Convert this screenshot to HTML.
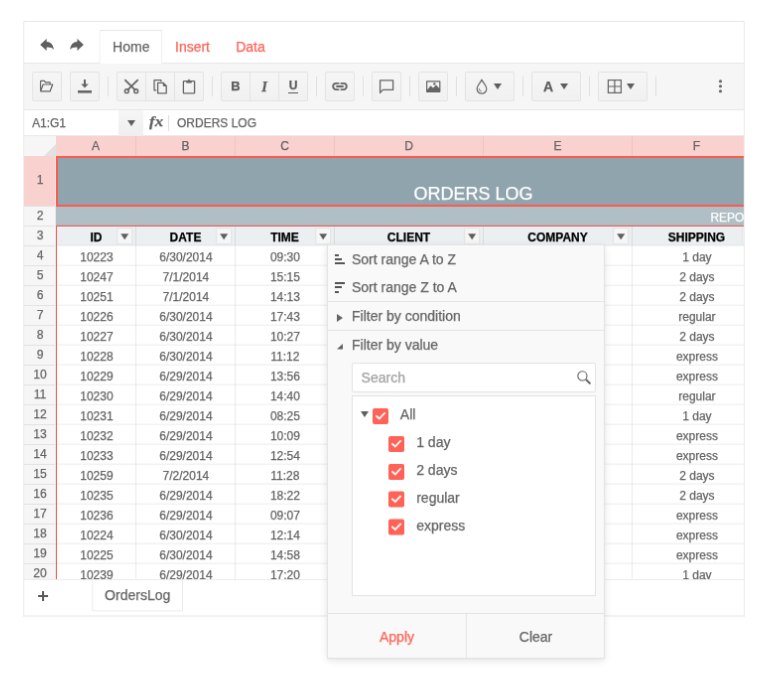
<!DOCTYPE html>
<html><head><meta charset="utf-8"><title>Spreadsheet</title>
<style>
html,body{margin:0;padding:0;background:#fff;}
body{width:770px;height:681px;overflow:hidden;position:relative;font-family:"Liberation Sans",sans-serif;font-size:14px;color:#656565;}
#s{-webkit-text-stroke:0.25px;will-change:transform;position:absolute;left:0;top:0;width:790px;height:700px;transform-origin:0 0;transform:translate(0.37px,0px) scale(0.99248,0.9934);}
#w{position:absolute;left:23px;top:21px;width:727px;height:600px;box-sizing:border-box;border:1px solid #e8e8e8;border-bottom:0;border-right-color:#ededed;overflow:hidden;background:#fff;}
#w div,#pop div{position:absolute;box-sizing:border-box;}
svg{position:absolute;overflow:visible;}
/* tabs */
#tabs{left:0;top:0;width:100%;height:41px;}
.tab{top:8px;height:33px;line-height:20px;padding:6px 12px;font-size:14px;color:#ff6358;border:1px solid transparent;border-bottom:0;white-space:nowrap;}
.tab.on{color:#656565;border-color:#e6e6e6;background:#fff;border-radius:2px 2px 0 0;height:34px;z-index:3;transform:translateX(0.4px);}
/* toolbar */
#tb{left:0;top:41px;width:100%;height:48px;background:#f6f6f6;border-top:1px solid #e8e8e8;border-bottom:1px solid #e8e8e8;}
.b{top:8px;height:30px;width:30px;border:1px solid #e4e4e4;border-radius:2px;background:linear-gradient(#f6f6f6,#f1f1f1);}
.b.g1{border-radius:2px 0 0 2px;}
.b.g2{border-radius:0;}
.b.g3{border-radius:0 2px 2px 0;}
.b.w{width:50px;}
.sp{top:13px;width:1px;height:20px;background:#e0e0e0;}
.arr{width:0;height:0;border-left:4.2px solid transparent;border-right:4.2px solid transparent;border-top:6.3px solid #5e5e5e;top:11.2px;}
/* formula bar */
#fbar{left:0;top:89px;width:100%;height:26px;background:#fff;font-size:12px;border-bottom:1px solid #eaeaea;}
#fbar .nm{left:8px;top:-1px;line-height:28px;height:27px;color:#656565;}
#fbar .sel{left:95px;top:0;width:25px;height:26px;background:linear-gradient(#f6f6f6,#efefef);}
#fbar .fx{left:126.4px;top:-1.7px;transform:scaleX(1.07);transform-origin:0 0;height:27px;line-height:26.4px;font-family:"Liberation Serif",serif;font-style:italic;font-weight:bold;font-size:15.5px;color:#606060;letter-spacing:0.2px;}
#fbar .vs{left:145px;top:5px;width:1px;height:16px;background:#e0e0e0;}
#fbar .val{left:154px;top:-1px;line-height:28px;height:27px;white-space:nowrap;}
/* grid */
#grid{left:0;top:115px;width:100%;height:446px;overflow:visible;font-size:12px;background:#fff;}
.corner{left:0;top:0;width:32px;height:20px;background:#f6f6f6;}
.corner i{position:absolute;right:0;bottom:0;width:0;height:0;border-left:12px solid transparent;border-bottom:12px solid #e1e1e1;}
.ch{top:0;height:20px;line-height:20.6px;text-align:center;background:#f9d1ce;color:#656565;border-left:1px solid #efc5c2;}
.rh{left:0;width:32px;height:20px;line-height:19.8px;padding-left:1px;text-align:center;background:#f6f6f6;border-top:1px solid #e3e3e3;border-right:1px solid #e6e6e6;color:#656565;}
.rh.sel{background:#f9d1ce;border-top:0;border-right:1px solid #fbe3e1;}
.r1{top:20px;right:0;height:50px;background:#90a4ae;}
.r2{top:70px;right:0;height:20px;background:#b0bec5;color:#fff;}
.r2 span{position:absolute;left:659.4px;top:0;line-height:25px;white-space:nowrap;}
.r3{top:90px;right:0;height:20px;background:#eceff1;}
.vl{top:90px;width:1px;height:400px;background:rgba(0,0,0,0.075);}
.hls{left:0;top:0;width:100%;height:100%;transform:translateY(-0.35px);}
.hl{right:0;height:1px;background:rgba(0,0,0,0.075);}
.hc{top:92px;height:20px;line-height:21.9px;text-align:center;font-weight:bold;color:#000;}
.fb{top:92px;width:16px;height:17px;border:1px solid #e1e3e4;background:#f6f6f6;border-radius:1.5px;transform:translate(0.2px,0.2px);}
.fb i{position:absolute;left:2.6px;top:4.7px;width:0;height:0;border-left:4.4px solid transparent;border-right:4.4px solid transparent;border-top:6.4px solid #5e5e5e;}
.c{height:20px;line-height:22.4px;padding-left:0.8px;text-align:center;color:#656565;white-space:nowrap;}
.title{top:20px;width:840px;height:50px;line-height:76.2px;padding-left:1px;text-align:center;font-size:18px;color:#fff;white-space:nowrap;}
.frange{top:90px;right:-5px;height:500px;border:1px solid #ff6358;border-top-color:#f85146;}
.active{top:20px;right:-5px;height:51px;border:2px solid #ff5a50;}
/* sheets bar */
#sheets{left:0;top:561px;width:100%;height:38px;background:#fff;border-top:1px solid #ededed;}
#sheets .plus{left:14px;top:11px;width:10px;height:10px;}
#sheets .plus:before{content:"";position:absolute;left:0;top:4px;width:10px;height:2px;background:#5a5a5a;}
#sheets .plus:after{content:"";position:absolute;left:4px;top:0;width:2px;height:10px;background:#5a5a5a;}
#sheets .st{left:68px;top:-1px;width:92px;height:33px;border:1px solid #e6e6e6;border-top:0;border-radius:0 0 2px 2px;line-height:33px;text-align:center;font-size:14px;color:#656565;transform:translate(0.2px,-0.4px);}
#bl{left:0;top:597px;width:100%;height:1px;background:#e8e8e8;transform:translateY(0.5px);}
/* popup */
#pop{position:absolute;left:329px;top:246px;width:280px;height:417px;background:#f9f9f9;border:1px solid #e4e4e4;box-sizing:border-box;box-shadow:0 3px 8px rgba(0,0,0,0.085),0 1px 3px rgba(0,0,0,0.05);font-size:14px;color:#656565;}
#pop .mi{left:0;width:278px;height:28px;line-height:20px;padding:4px 0 4px 24px;white-space:nowrap;}
#pop .hr{left:0;width:278px;height:1px;background:#e6e6e6;}
#pop .bar{height:2px;background:#555;}
#pop .srch{left:24px;top:118px;width:246px;height:30px;background:#fff;border:1px solid #e4e4e4;border-radius:2px;line-height:28px;padding-left:8.6px;color:#a3a3a3;}
#pop .tree{left:24px;top:151px;width:246px;height:202px;background:#fff;border:1px solid #e4e4e4;}
#pop .cb{width:16px;height:16px;background:#ff6358;border-radius:2px;}
#pop .tl{height:28px;line-height:28px;white-space:nowrap;}
#pop .btns{left:0;top:370px;width:278px;height:45px;border-top:1px solid #e4e4e4;}
#pop .btn{top:0;width:140px;height:44px;line-height:46.8px;text-align:center;}

</style></head>
<body>
<div id="s">
<div id="w">
<div id="tabs">
<svg style="left:16px;top:16px" width="14" height="14" viewBox="0 0 14 14"><path d="M0.1 6.9 L6.6 1.1 V4 C10.6 4.1 13.3 6.8 13.9 12 C12.2 10 10 9.4 6.6 9.5 V12.9 Z" fill="#606060"/></svg>
<svg style="left:46px;top:16px" width="14" height="14" viewBox="0 0 14 14"><path d="M13.9 6.9 L7.4 1.1 V4 C3.4 4.1 0.7 6.8 0.1 12 C1.8 10 4 9.4 7.4 9.5 V12.9 Z" fill="#606060"/></svg>
<div class="tab on" style="left:75px;width:64px;padding-left:12.7px">Home</div>
<div class="tab" style="left:139px">Insert</div>
<div class="tab" style="left:200px;transform:translateX(0.2px)">Data</div>
</div>
<div id="tb">
<div class="b" style="left:8px"><svg style="left:6px;top:6px" width="16" height="16" viewBox="0 0 16 16" fill="none" stroke="#606060" stroke-width="1.15" stroke-linejoin="round"><path d="M1.5 12.6 V2.8 Q1.5 2.3 2 2.3 H5.3 L6.5 3.9 H11.1 V5.8"/><path d="M1.5 12.8 L4.1 6 H13.7 L11.1 12.8 Z"/></svg></div>
<div class="b" style="left:46px"><svg style="left:6px;top:6px" width="16" height="16" viewBox="0 0 16 16" fill="#656565"><path d="M7 1 H9 V5.6 H11.8 L8 9.6 L4.2 5.6 H7 Z"/><rect x="1" y="12" width="14" height="2.6"/></svg></div>
<div class="sp" style="left:84px"></div>
<div class="b g1" style="left:93px"><svg style="left:6px;top:6px" width="16" height="16" viewBox="0 0 16 16" fill="none" stroke="#606060" stroke-width="1.6" stroke-linecap="round"><path d="M1.8 1.6 L11.6 11.4"/><path d="M14.2 1.6 L4.4 11.4"/><circle cx="3.3" cy="12.7" r="1.9" stroke-width="1.45"/><circle cx="12.7" cy="12.7" r="1.9" stroke-width="1.45"/></svg></div>
<div class="b g2" style="left:122px"><svg style="left:6px;top:6px" width="16" height="16" viewBox="0 0 16 16" fill="none" stroke="#656565" stroke-width="1.3" stroke-linejoin="round"><path d="M4.2 11.8 H2 V1.6 H8.8 V3.2"/><path d="M5.6 4.4 H11.2 L14.2 7.4 V14.8 H5.6 Z" fill="#f4f4f4"/><path d="M11.2 4.4 V7.4 H14.2 Z" stroke-width="1" fill="#656565"/></svg></div>
<div class="b g3" style="left:151px"><svg style="left:6px;top:6px" width="16" height="16" viewBox="0 0 16 16" fill="none" stroke="#656565" stroke-width="1.3" stroke-linejoin="round"><rect x="2.4" y="2.6" width="11.2" height="12.2" rx="0.6"/><path d="M5.5 2.6 H6.8 Q7.1 0.9 8 0.9 Q8.9 0.9 9.2 2.6 H10.5 V4.2 H5.5 Z" fill="#656565" stroke-width="0.5"/></svg></div>
<div class="sp" style="left:189px"></div>
<div class="b g1" style="left:198px"><span style="position:absolute;left:0;width:28px;text-align:center;top:0;line-height:28px;font-weight:bold;font-size:13px;color:#5c5c5c">B</span></div>
<div class="b g2" style="left:227px"><span style="position:absolute;left:0;width:28px;text-align:center;top:0;line-height:28.6px;font-family:'Liberation Serif',serif;font-style:italic;font-weight:bold;font-size:14.5px;color:#5c5c5c">I</span></div>
<div class="b g3" style="left:256px"><span style="position:absolute;left:0;width:28px;text-align:center;top:0;line-height:26.4px;font-weight:bold;font-size:12px;color:#5c5c5c">U</span><i style="position:absolute;left:9.4px;top:19.6px;width:9.2px;height:1px;background:#5c5c5c"></i></div>
<div class="sp" style="left:294px"></div>
<div class="b" style="left:303px"><svg style="left:6px;top:6px" width="16" height="16" viewBox="0 0 16 16" fill="none" stroke="#656565" stroke-width="1.9" stroke-linecap="round"><path d="M6.6 4.9 H4.3 A3.1 3.1 0 0 0 4.3 11.1 H6.6"/><path d="M9.4 4.9 H11.7 A3.1 3.1 0 0 1 11.7 11.1 H9.4"/><path d="M5 8 H11"/></svg></div>
<div class="sp" style="left:341px"></div>
<div class="b" style="left:350px"><svg style="left:6px;top:6px" width="16" height="16" viewBox="0 0 16 16" fill="none" stroke="#656565" stroke-width="1.3" stroke-linejoin="round"><path d="M1.6 1.8 H14.6 V11.4 H4.4 L1.6 14.4 Z"/></svg></div>
<div class="sp" style="left:388px"></div>
<div class="b" style="left:397px"><svg style="left:6px;top:6px" width="16" height="16" viewBox="0 0 16 16"><rect x="1" y="2.2" width="14.4" height="11.8" rx="0.8" fill="#656565"/><path d="M2.2 11.2 L5.6 7.2 L8 9.6 L11 6.6 L14.2 9.8 V3.4 H2.2 Z" fill="#f4f4f4"/><circle cx="9.3" cy="5.4" r="1.2" fill="#656565"/></svg></div>
<div class="sp" style="left:435px"></div>
<div class="b w" style="left:444px"><svg style="left:8.2px;top:6px" width="16" height="16" viewBox="0 0 16 16" fill="none" stroke="#656565" stroke-width="1.2"><path d="M8 1.4 C6.4 4.4 3.2 7.4 3.2 10.4 A4.8 4.8 0 0 0 12.8 10.4 C12.8 7.4 9.6 4.4 8 1.4 Z"/><path d="M5.4 10.2 C5.4 11.6 6.4 12.6 7.6 12.7" stroke-width="1"/></svg><div class="arr" style="left:28.3px"></div></div>
<div class="sp" style="left:502px"></div>
<div class="b w" style="left:511px"><span style="position:absolute;left:6px;width:20px;text-align:center;top:0;line-height:29px;font-weight:bold;font-size:14px;color:#5c5c5c">A</span><div class="arr" style="left:28.3px"></div></div>
<div class="sp" style="left:569px"></div>
<div class="b w" style="left:578px"><svg style="left:8.2px;top:6px" width="16" height="16" viewBox="0 0 16 16" fill="none" stroke="#656565" stroke-width="1.2"><rect x="1.4" y="1.6" width="13" height="12.8"/><path d="M7.9 1.6 V14.4 M1.4 8 H14.4"/></svg><div class="arr" style="left:28.3px"></div></div>
<div class="sp" style="left:636px"></div>
<svg style="left:700px;top:16px" width="3" height="14" viewBox="0 0 3 14" fill="#656565"><circle cx="1.5" cy="1.8" r="1.55"/><circle cx="1.5" cy="6.8" r="1.55"/><circle cx="1.5" cy="11.8" r="1.55"/></svg>
</div>
<div id="fbar">
<div class="nm">A1:G1</div>
<div class="sel"><div class="arr" style="left:8.6px;top:10.3px;border-left-width:4.4px;border-right-width:4.4px;border-top-width:6px"></div></div>
<div class="fx">fx</div>
<div class="vs"></div>
<div class="val">ORDERS LOG</div>
</div>
<div id="grid">
<div class="corner"><i></i></div>
<div class="ch" style="left:32px;width:80px;border-left:0">A</div>
<div class="ch" style="left:112px;width:100px">B</div>
<div class="ch" style="left:212px;width:100px">C</div>
<div class="ch" style="left:312px;width:150px">D</div>
<div class="ch" style="left:462px;width:150px">E</div>
<div class="ch" style="left:612px;width:130px">F</div>
<div class="ch" style="left:742px;width:120px">G</div>
<div class="rh sel" style="top:20px;height:50px;line-height:48.8px">1</div>
<div class="rh" style="top:70px">2</div>
<div class="rh" style="top:90px">3</div>
<div class="rh" style="top:110px">4</div>
<div class="rh" style="top:130px">5</div>
<div class="rh" style="top:150px">6</div>
<div class="rh" style="top:170px">7</div>
<div class="rh" style="top:190px">8</div>
<div class="rh" style="top:210px">9</div>
<div class="rh" style="top:230px">10</div>
<div class="rh" style="top:250px">11</div>
<div class="rh" style="top:270px">12</div>
<div class="rh" style="top:290px">13</div>
<div class="rh" style="top:310px">14</div>
<div class="rh" style="top:330px">15</div>
<div class="rh" style="top:350px">16</div>
<div class="rh" style="top:370px">17</div>
<div class="rh" style="top:390px">18</div>
<div class="rh" style="top:410px">19</div>
<div class="rh" style="top:430px">20</div>
<div class="rh" style="top:450px">21</div>
<div class="r1" style="left:32px"></div>
<div class="r2" style="left:32px"><span>REPORT</span></div>
<div class="r3" style="left:32px"></div>
<div class="vl" style="left:112px"></div>
<div class="vl" style="left:212px"></div>
<div class="vl" style="left:312px"></div>
<div class="vl" style="left:462px"></div>
<div class="vl" style="left:612px"></div>
<div class="vl" style="left:742px"></div>
<div class="hls">
<div class="hl" style="top:90px;left:32px"></div>
<div class="hl" style="top:110px;left:32px"></div>
<div class="hl" style="top:130px;left:32px"></div>
<div class="hl" style="top:150px;left:32px"></div>
<div class="hl" style="top:170px;left:32px"></div>
<div class="hl" style="top:190px;left:32px"></div>
<div class="hl" style="top:210px;left:32px"></div>
<div class="hl" style="top:230px;left:32px"></div>
<div class="hl" style="top:250px;left:32px"></div>
<div class="hl" style="top:270px;left:32px"></div>
<div class="hl" style="top:290px;left:32px"></div>
<div class="hl" style="top:310px;left:32px"></div>
<div class="hl" style="top:330px;left:32px"></div>
<div class="hl" style="top:350px;left:32px"></div>
<div class="hl" style="top:370px;left:32px"></div>
<div class="hl" style="top:390px;left:32px"></div>
<div class="hl" style="top:410px;left:32px"></div>
<div class="hl" style="top:430px;left:32px"></div>
<div class="hl" style="top:450px;left:32px"></div>
<div class="hl hl2" style="top:70px;left:32px"></div>
</div>
<div class="hc" style="left:33px;width:79px">ID</div>
<div class="fb" style="left:93px"><i></i></div>
<div class="hc" style="left:113px;width:99px">DATE</div>
<div class="fb" style="left:193px"><i></i></div>
<div class="hc" style="left:213px;width:99px">TIME</div>
<div class="fb" style="left:293px"><i></i></div>
<div class="hc" style="left:313px;width:149px">CLIENT</div>
<div class="fb" style="left:443px"><i></i></div>
<div class="hc" style="left:463px;width:149px">COMPANY</div>
<div class="fb" style="left:593px"><i></i></div>
<div class="hc" style="left:613px;width:129px">SHIPPING</div>
<div class="fb" style="left:723px"><i></i></div>
<div class="c" style="top:111px;left:33px;width:79px">10223</div>
<div class="c" style="top:111px;left:113px;width:99px">6/30/2014</div>
<div class="c" style="top:111px;left:213px;width:99px">09:30</div>
<div class="c" style="top:111px;left:613px;width:129px">1 day</div>
<div class="c" style="top:131px;left:33px;width:79px">10247</div>
<div class="c" style="top:131px;left:113px;width:99px">7/1/2014</div>
<div class="c" style="top:131px;left:213px;width:99px">15:15</div>
<div class="c" style="top:131px;left:613px;width:129px">2 days</div>
<div class="c" style="top:151px;left:33px;width:79px">10251</div>
<div class="c" style="top:151px;left:113px;width:99px">7/1/2014</div>
<div class="c" style="top:151px;left:213px;width:99px">14:13</div>
<div class="c" style="top:151px;left:613px;width:129px">2 days</div>
<div class="c" style="top:171px;left:33px;width:79px">10226</div>
<div class="c" style="top:171px;left:113px;width:99px">6/30/2014</div>
<div class="c" style="top:171px;left:213px;width:99px">17:43</div>
<div class="c" style="top:171px;left:613px;width:129px">regular</div>
<div class="c" style="top:191px;left:33px;width:79px">10227</div>
<div class="c" style="top:191px;left:113px;width:99px">6/30/2014</div>
<div class="c" style="top:191px;left:213px;width:99px">10:27</div>
<div class="c" style="top:191px;left:613px;width:129px">2 days</div>
<div class="c" style="top:211px;left:33px;width:79px">10228</div>
<div class="c" style="top:211px;left:113px;width:99px">6/30/2014</div>
<div class="c" style="top:211px;left:213px;width:99px">11:12</div>
<div class="c" style="top:211px;left:613px;width:129px">express</div>
<div class="c" style="top:231px;left:33px;width:79px">10229</div>
<div class="c" style="top:231px;left:113px;width:99px">6/29/2014</div>
<div class="c" style="top:231px;left:213px;width:99px">13:56</div>
<div class="c" style="top:231px;left:613px;width:129px">express</div>
<div class="c" style="top:251px;left:33px;width:79px">10230</div>
<div class="c" style="top:251px;left:113px;width:99px">6/29/2014</div>
<div class="c" style="top:251px;left:213px;width:99px">14:40</div>
<div class="c" style="top:251px;left:613px;width:129px">regular</div>
<div class="c" style="top:271px;left:33px;width:79px">10231</div>
<div class="c" style="top:271px;left:113px;width:99px">6/29/2014</div>
<div class="c" style="top:271px;left:213px;width:99px">08:25</div>
<div class="c" style="top:271px;left:613px;width:129px">1 day</div>
<div class="c" style="top:291px;left:33px;width:79px">10232</div>
<div class="c" style="top:291px;left:113px;width:99px">6/29/2014</div>
<div class="c" style="top:291px;left:213px;width:99px">10:09</div>
<div class="c" style="top:291px;left:613px;width:129px">express</div>
<div class="c" style="top:311px;left:33px;width:79px">10233</div>
<div class="c" style="top:311px;left:113px;width:99px">6/29/2014</div>
<div class="c" style="top:311px;left:213px;width:99px">12:54</div>
<div class="c" style="top:311px;left:613px;width:129px">express</div>
<div class="c" style="top:331px;left:33px;width:79px">10259</div>
<div class="c" style="top:331px;left:113px;width:99px">7/2/2014</div>
<div class="c" style="top:331px;left:213px;width:99px">11:28</div>
<div class="c" style="top:331px;left:613px;width:129px">2 days</div>
<div class="c" style="top:351px;left:33px;width:79px">10235</div>
<div class="c" style="top:351px;left:113px;width:99px">6/29/2014</div>
<div class="c" style="top:351px;left:213px;width:99px">18:22</div>
<div class="c" style="top:351px;left:613px;width:129px">2 days</div>
<div class="c" style="top:371px;left:33px;width:79px">10236</div>
<div class="c" style="top:371px;left:113px;width:99px">6/29/2014</div>
<div class="c" style="top:371px;left:213px;width:99px">09:07</div>
<div class="c" style="top:371px;left:613px;width:129px">express</div>
<div class="c" style="top:391px;left:33px;width:79px">10224</div>
<div class="c" style="top:391px;left:113px;width:99px">6/30/2014</div>
<div class="c" style="top:391px;left:213px;width:99px">12:14</div>
<div class="c" style="top:391px;left:613px;width:129px">express</div>
<div class="c" style="top:411px;left:33px;width:79px">10225</div>
<div class="c" style="top:411px;left:113px;width:99px">6/30/2014</div>
<div class="c" style="top:411px;left:213px;width:99px">14:58</div>
<div class="c" style="top:411px;left:613px;width:129px">express</div>
<div class="c" style="top:431px;left:33px;width:79px">10239</div>
<div class="c" style="top:431px;left:113px;width:99px">6/29/2014</div>
<div class="c" style="top:431px;left:213px;width:99px">17:20</div>
<div class="c" style="top:431px;left:613px;width:129px">1 day</div>
<div class="title" style="left:32px">ORDERS LOG</div>
<div class="frange" style="left:32px"></div>
<div class="active" style="left:32px"></div>
</div>
<div id="sheets">
<div class="plus"></div>
<div class="st">OrdersLog</div>
</div>
<div id="bl"></div>

</div>
<div id="pop">
<div class="mi" style="top:0">Sort range A to Z</div>
<div class="bar" style="left:7px;top:8.7px;width:4.4px"></div>
<div class="bar" style="left:7px;top:12.9px;width:7.4px"></div>
<div class="bar" style="left:7px;top:17.1px;width:10.4px"></div>
<div class="mi" style="top:28px">Sort range Z to A</div>
<div class="bar" style="left:7px;top:37.1px;width:10.4px"></div>
<div class="bar" style="left:7px;top:41.3px;width:7.4px"></div>
<div class="bar" style="left:7px;top:45.5px;width:4.4px"></div>
<div class="hr" style="top:56px"></div>
<div class="mi" style="top:57px">Filter by condition</div>
<svg style="left:9.4px;top:69.1px" width="6" height="8" viewBox="0 0 6 8"><path d="M0 0 L6 4 L0 8 Z" fill="#656565"/></svg>
<div class="hr" style="top:85px"></div>
<div class="mi" style="top:86px">Filter by value</div>
<svg style="left:8.8px;top:99px" width="6" height="5.4" viewBox="0 0 6 5.4"><path d="M6 0 V5.4 H0 Z" fill="#606060"/></svg>
<div class="srch">Search<svg style="right:3.4px;top:5.6px;left:auto" width="16" height="16" viewBox="0 0 16 16" fill="none" stroke="#606060" stroke-width="1.1" stroke-linecap="butt"><circle cx="6.4" cy="6.4" r="4.6"/><path d="M9.9 9.9 L14.4 14.4" stroke-width="2"/></svg></div>
<div class="tree">
<div class="arr" style="left:8px;top:15px;border-top-width:6.2px;border-left-width:4.2px;border-right-width:4.2px"></div>
<div class="cb" style="left:20px;top:12px"><svg style="left:0;top:0" width="16" height="16" viewBox="0 0 16 16" fill="none" stroke="#fff" stroke-width="1.8" stroke-linecap="square"><path d="M4 7.9 L6.8 10.5 L12 4.9"/></svg></div>
<div class="tl" style="left:47.8px;top:4px">All</div>
<div class="cb" style="left:36px;top:40px"><svg style="left:0;top:0" width="16" height="16" viewBox="0 0 16 16" fill="none" stroke="#fff" stroke-width="1.8" stroke-linecap="square"><path d="M4 7.9 L6.8 10.5 L12 4.9"/></svg></div>
<div class="tl" style="left:64.2px;top:32px">1 day</div>
<div class="cb" style="left:36px;top:68px"><svg style="left:0;top:0" width="16" height="16" viewBox="0 0 16 16" fill="none" stroke="#fff" stroke-width="1.8" stroke-linecap="square"><path d="M4 7.9 L6.8 10.5 L12 4.9"/></svg></div>
<div class="tl" style="left:64.2px;top:60px">2 days</div>
<div class="cb" style="left:36px;top:96px;transform:translateY(-0.4px)"><svg style="left:0;top:0" width="16" height="16" viewBox="0 0 16 16" fill="none" stroke="#fff" stroke-width="1.8" stroke-linecap="square"><path d="M4 7.9 L6.8 10.5 L12 4.9"/></svg></div>
<div class="tl" style="left:64.2px;top:88px;transform:translateY(-0.4px)">regular</div>
<div class="cb" style="left:36px;top:124px;transform:translateY(-0.4px)"><svg style="left:0;top:0" width="16" height="16" viewBox="0 0 16 16" fill="none" stroke="#fff" stroke-width="1.8" stroke-linecap="square"><path d="M4 7.9 L6.8 10.5 L12 4.9"/></svg></div>
<div class="tl" style="left:64.2px;top:116px;transform:translateY(-0.4px)">express</div>
</div>
<div class="btns">
<div class="btn" style="left:0;color:#ff6358;border-right:1px solid #e4e4e4">Apply</div>
<div class="btn" style="left:139.5px">Clear</div>
</div>
</div>

</div>
</body></html>
